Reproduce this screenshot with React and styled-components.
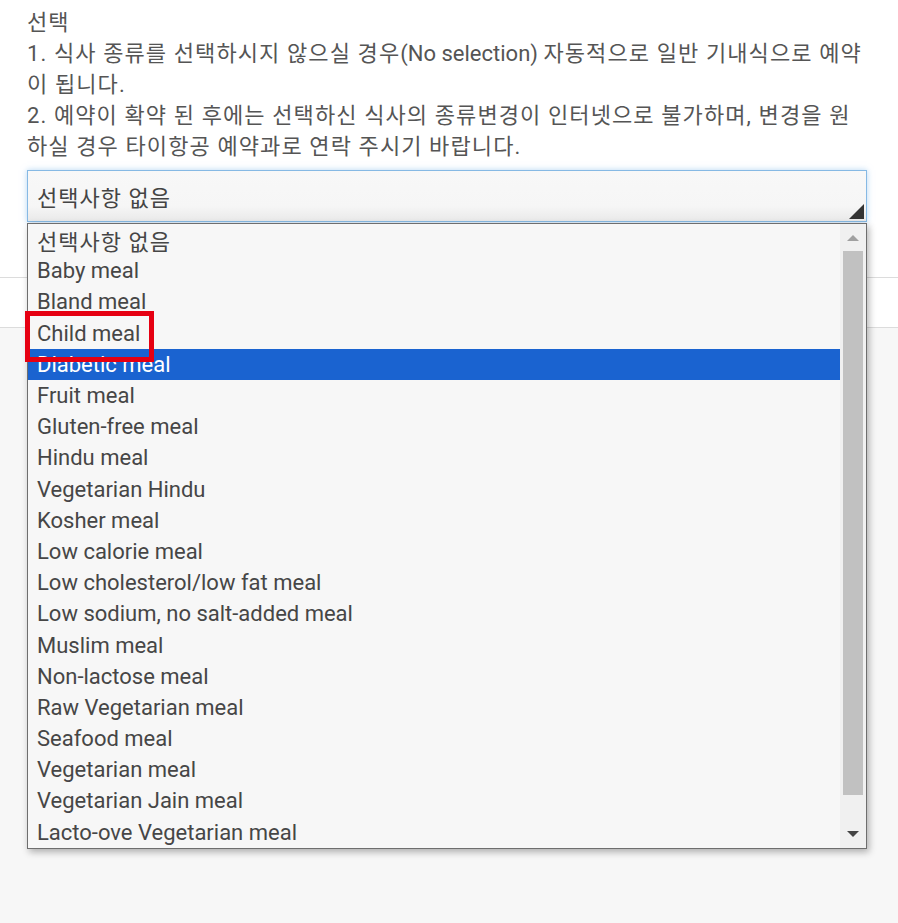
import React from "react";
import styled, { createGlobalStyle } from "styled-components";

const GlobalStyle = createGlobalStyle`
  html, body { margin: 0; padding: 0; background: #f7f7f7; }
  body { font-family: Roboto, "Noto Sans CJK KR", "Noto Sans", sans-serif; }
  * { box-sizing: border-box; }
`;

const Page = styled.div`
  min-height: 923px;
  display: flex;
  flex-direction: column;
  background: #f7f7f7;
`;

const Top = styled.div`
  background: #ffffff;
  padding: 7px 20px 55px 27px;
`;

const Notice = styled.div`
  font-size: 22px;
  line-height: 31px;
  color: #555555;
  letter-spacing: 1.1px;
  white-space: nowrap;
`;

const Latin = styled.span`
  letter-spacing: 0;
`;

const SelectWrap = styled.div`
  position: relative;
  margin-top: 8px;
  width: 840px;
`;

const SelectBox = styled.div`
  height: 52px;
  border: 1px solid #86b9e4;
  box-shadow: 0 0 6px rgba(120, 180, 235, 0.55);
  background: linear-gradient(#f8f8f8 0%, #f6f6f6 70%, #e9e9e9 100%);
  display: flex;
  align-items: center;
  padding-left: 9px;
  font-size: 22px;
  letter-spacing: 1px;
  color: #444;
  position: relative;
`;

const Corner = styled.span`
  position: absolute;
  right: 2px;
  bottom: 2px;
  width: 0;
  height: 0;
  border-style: solid;
  border-width: 0 0 15px 15px;
  border-color: transparent transparent #333 transparent;
`;

const List = styled.div`
  position: absolute;
  top: 53px;
  left: 0;
  width: 840px;
  border: 1px solid #6e6e6e;
  background: #f7f7f7;
  box-shadow: 2px 3px 7px rgba(0, 0, 0, 0.3);
  display: flex;
  z-index: 5;
`;

const Options = styled.div`
  flex: 1;
  display: flex;
  flex-direction: column;
`;

const Option = styled.div`
  height: 31.2px;
  display: flex;
  align-items: center;
  padding-left: 9px;
  font-size: 22px;
  letter-spacing: ${(p) => (p.$ko ? "1px" : "0")};
  color: ${(p) => (p.$active ? "#ffffff" : "#464646")};
  background: ${(p) => (p.$active ? "#1a63d0" : "transparent")};
  white-space: nowrap;
`;

const Scrollbar = styled.div`
  width: 26px;
  background: #f0f0f0;
  display: flex;
  flex-direction: column;
  align-items: center;
`;

const Arrow = styled.div`
  height: 27px;
  width: 100%;
  display: flex;
  align-items: center;
  justify-content: center;
`;

const ArrowGlyph = styled.span`
  width: 0;
  height: 0;
  border-left: 6px solid transparent;
  border-right: 6px solid transparent;
  ${(p) =>
    p.$down
      ? `border-top: 6px solid #444;`
      : `border-bottom: 6px solid #a0a0a0;`}
`;

const Thumb = styled.div`
  width: 20px;
  height: 544px;
  background: #c1c1c1;
`;

const Track = styled.div`
  flex: 1;
`;

const Annotation = styled.div`
  position: absolute;
  left: -3px;
  top: 87px;
  width: 129px;
  height: 51px;
  border: 5px solid #e60012;
  pointer-events: none;
  z-index: 6;
`;

const Strip = styled.div`
  height: 51px;
  background: #ffffff;
  border-top: 1px solid #dcdcdc;
  border-bottom: 1px solid #dcdcdc;
`;

const Rest = styled.div`
  flex: 1;
  background: #f7f7f7;
`;

const meals = [
  "선택사항 없음",
  "Baby meal",
  "Bland meal",
  "Child meal",
  "Diabetic meal",
  "Fruit meal",
  "Gluten-free meal",
  "Hindu meal",
  "Vegetarian Hindu",
  "Kosher meal",
  "Low calorie meal",
  "Low cholesterol/low fat meal",
  "Low sodium, no salt-added meal",
  "Muslim meal",
  "Non-lactose meal",
  "Raw Vegetarian meal",
  "Seafood meal",
  "Vegetarian meal",
  "Vegetarian Jain meal",
  "Lacto-ove Vegetarian meal",
];

export default function App() {
  return (
    <>
      <GlobalStyle />
      <Page>
        <Top>
          <Notice>
            선택
            <br />
            1. 식사 종류를 선택하시지 않으실 경우<Latin>(No selection) </Latin>자동적으로 일반 기내식으로 예약
            <br />
            이 됩니다.
            <br />
            2. 예약이 확약 된 후에는 선택하신 식사의 종류변경이 인터넷으로 불가하며, 변경을 원
            <br />
            하실 경우 타이항공 예약과로 연락 주시기 바랍니다.
          </Notice>
          <SelectWrap>
            <SelectBox>
              선택사항 없음
              <Corner />
            </SelectBox>
            <List>
              <Options>
                {meals.map((m, i) => (
                  <Option key={m} $active={i === 4} $ko={i === 0}>
                    {m}
                  </Option>
                ))}
              </Options>
              <Scrollbar>
                <Arrow>
                  <ArrowGlyph />
                </Arrow>
                <Thumb />
                <Track />
                <Arrow>
                  <ArrowGlyph $down />
                </Arrow>
              </Scrollbar>
              <Annotation />
            </List>
          </SelectWrap>
        </Top>
        <Strip />
        <Rest />
      </Page>
    </>
  );
}
